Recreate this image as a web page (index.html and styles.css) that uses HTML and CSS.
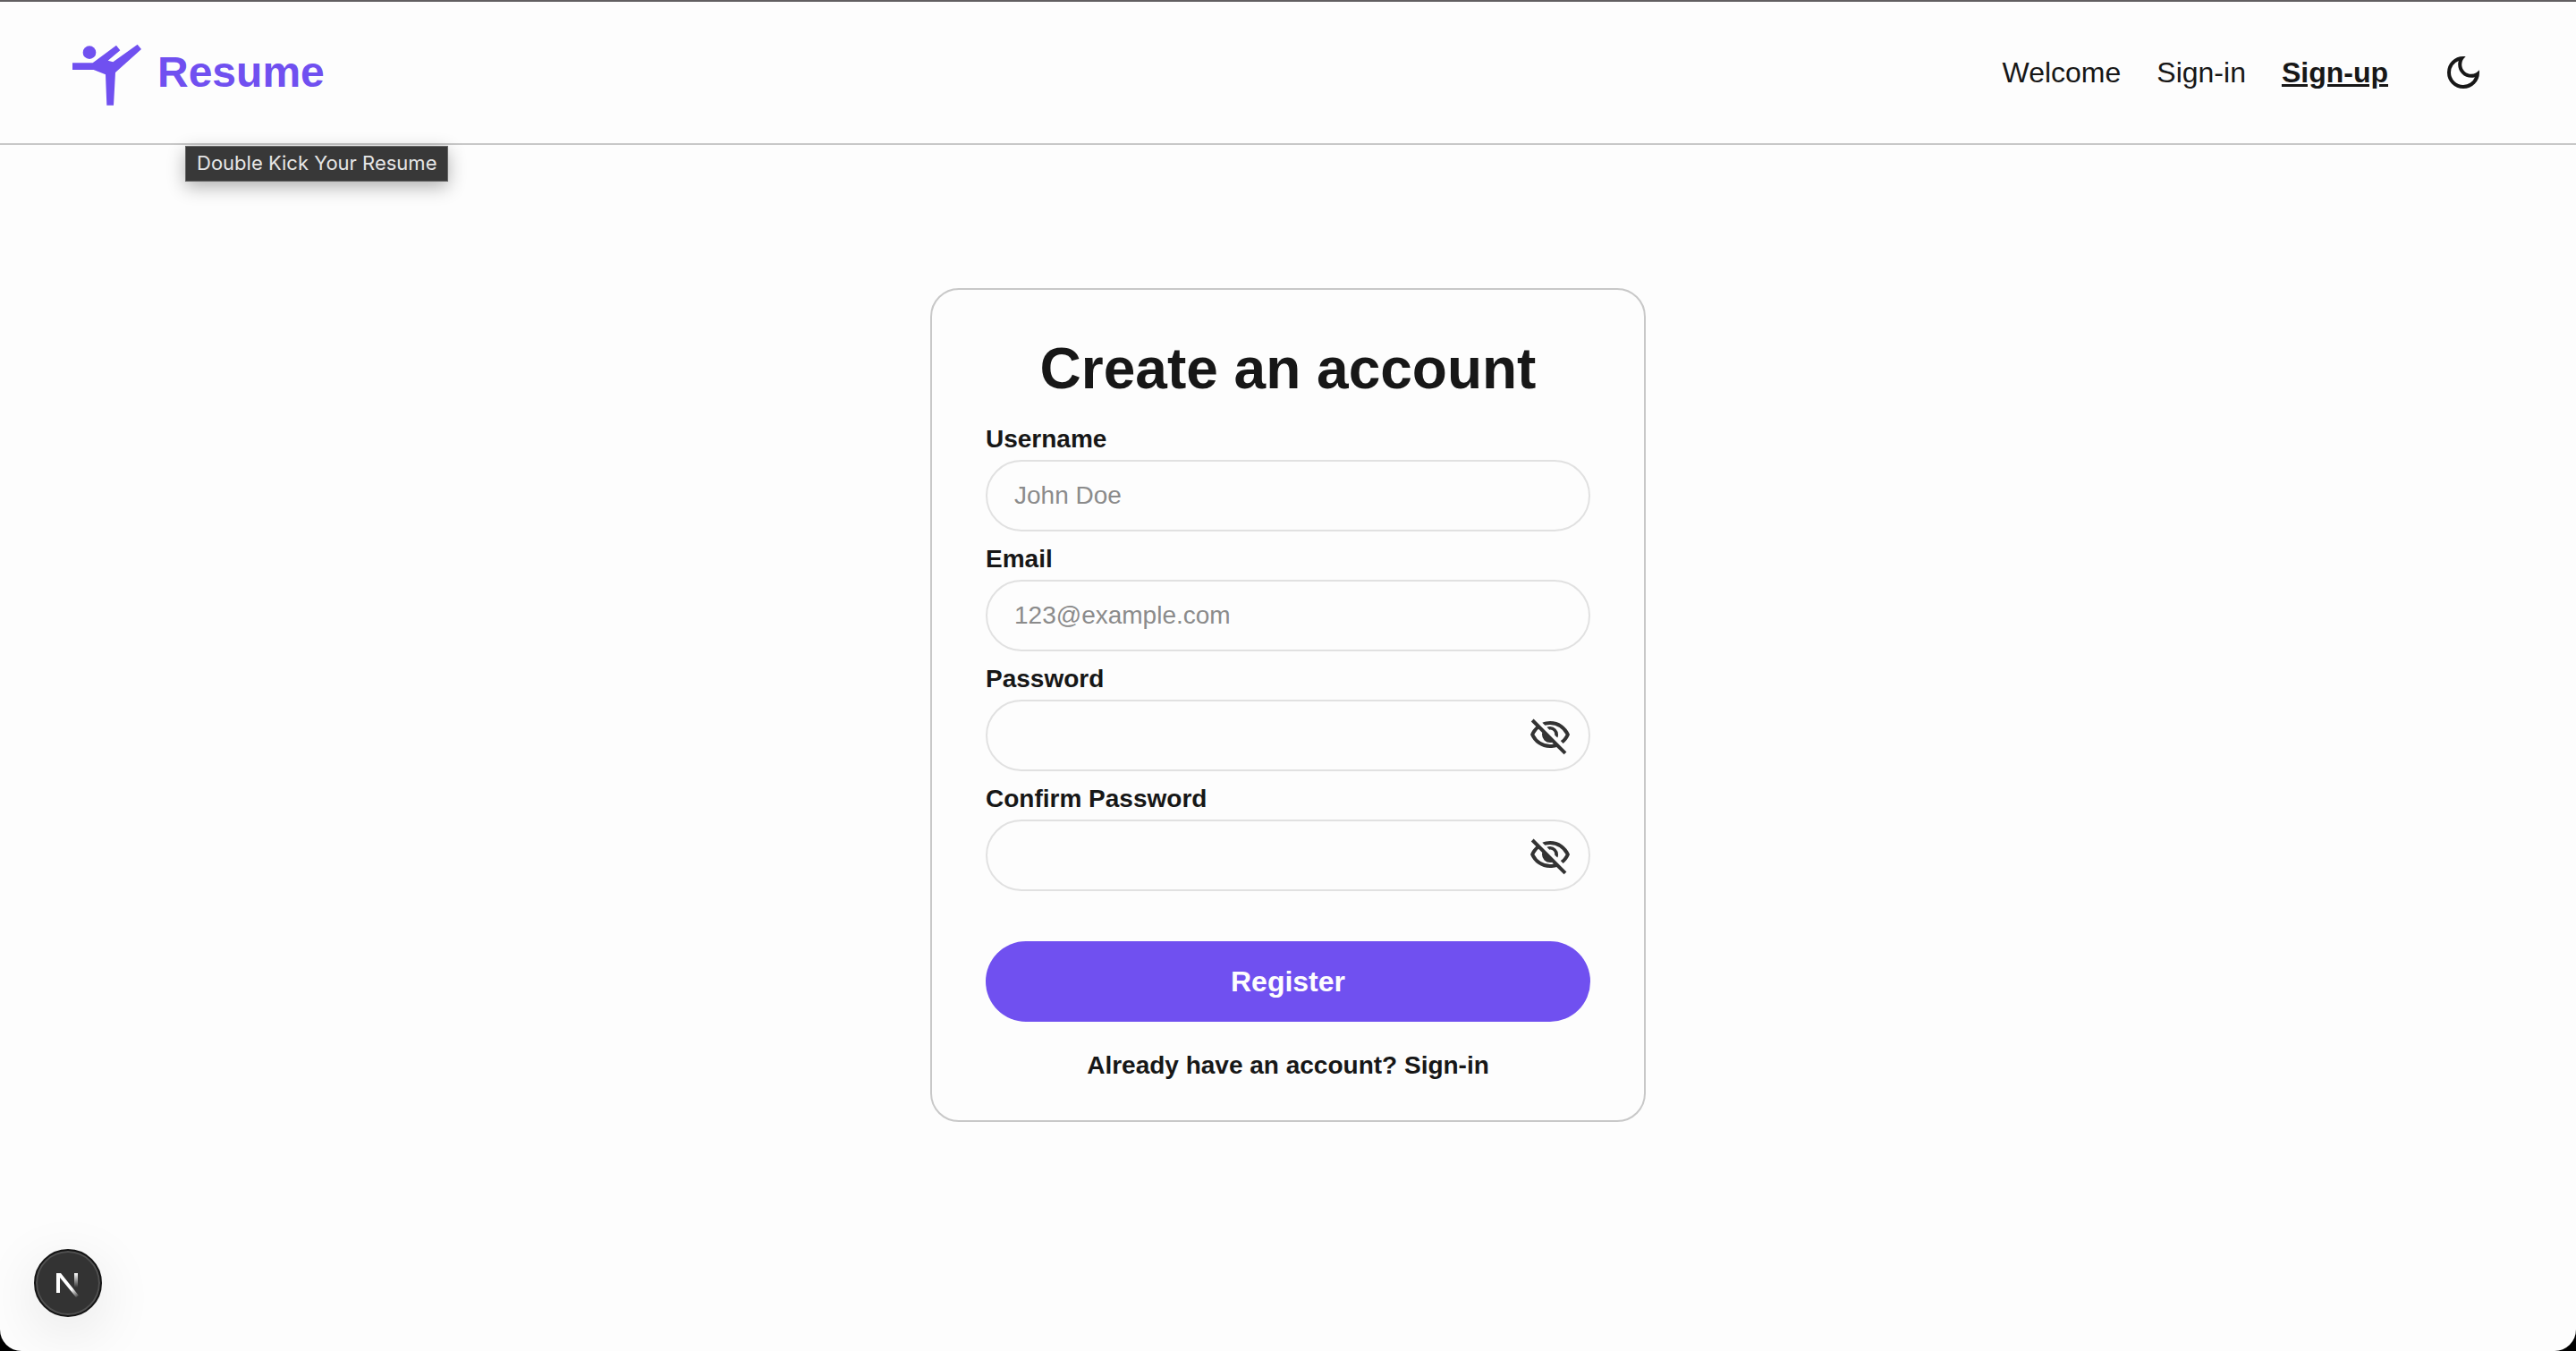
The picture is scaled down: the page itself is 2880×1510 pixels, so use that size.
FILE: index.html
```html
<!DOCTYPE html>
<html lang="en">
<head>
<meta charset="utf-8">
<meta name="viewport" content="width=device-width, initial-scale=1">
<title>Resume - Sign-up</title>
<link rel="stylesheet" href="styles.css">
</head>
<body>
<div class="page">
  <header class="header">
    <a class="brand" href="#" aria-describedby="brand-tip">
      <svg class="brand-icon" viewBox="60 33 240 240" aria-hidden="true">
        <circle cx="120" cy="86" r="22"/>
        <path d="M63 121H131L210 62L223 79L182 113L199 118L281 59L294 75L207 153L201 263H178L174 160L134 144H63Z"/>
      </svg>
      <span>Resume</span>
    </a>
    <span class="tooltip" id="brand-tip" role="tooltip">Double Kick Your Resume</span>
    <nav class="nav">
      <a class="nav-link" href="#">Welcome</a>
      <a class="nav-link" href="#">Sign-in</a>
      <a class="nav-link nav-link-active" href="#" aria-current="page">Sign-up</a>
      <button class="theme-button" type="button" aria-label="Switch to dark mode">
        <svg class="icon" viewBox="0 -960 960 960" aria-hidden="true"><path d="M480-120q-150 0-255-105T120-480q0-150 105-255t255-105q14 0 27.500 1t26.500 3q-41 29-65.500 75.500T444-660q0 90 63 153t153 63q55 0 101-24.500t75-65.500q2 13 3 26.500t1 27.500q0 150-105 255T480-120Zm0-80q88 0 158-48.500T740-375q-20 5-40 8t-40 3q-123 0-209.500-86.500T364-660q0-20 3-40t8-40q-78 32-126.500 102T200-480q0 116 82 198t198 82Z"/></svg>
      </button>
    </nav>
  </header>
  <main class="main">
    <section class="card">
      <h1 class="title">Create an account</h1>
      <form class="form">
        <div class="field">
          <label class="label" for="username">Username</label>
          <input class="input" id="username" type="text" placeholder="John Doe">
        </div>
        <div class="field">
          <label class="label" for="email">Email</label>
          <input class="input" id="email" type="email" placeholder="123@example.com">
        </div>
        <div class="field">
          <label class="label" for="password">Password</label>
          <div class="password">
            <input class="input" id="password" type="password">
            <button class="eye-button" type="button" aria-label="Show password">
              <svg class="icon" viewBox="0 -960 960 960" aria-hidden="true"><path d="m644-428-58-58q9-47-27-88t-93-32l-58-58q17-8 34.500-12t37.500-4q75 0 127.500 52.500T660-500q0 20-4 37.500T644-428Zm128 126-58-56q38-29 67.500-63.500T832-500q-50-101-143.500-160.500T480-720q-29 0-57 4t-55 12l-62-62q41-17 84-25.500t90-8.500q151 0 269 83.500T920-500q-23 59-60.500 109.500T772-302Zm20 246L624-222q-35 11-70.500 16.500T480-200q-151 0-269-83.500T40-500q21-53 53-98.500t73-81.500L56-792l56-56 736 736-56 56ZM222-624q-29 26-53 57t-41 67q50 101 143.500 160.500T480-280q20 0 39-2.500t39-5.500l-36-38q-11 3-21 4.500t-21 1.500q-75 0-127.500-52.500T300-500q0-11 1.500-21t4.500-21l-84-82Z"/></svg>
            </button>
          </div>
        </div>
        <div class="field">
          <label class="label" for="confirm">Confirm Password</label>
          <div class="password">
            <input class="input" id="confirm" type="password">
            <button class="eye-button" type="button" aria-label="Show confirmed password">
              <svg class="icon" viewBox="0 -960 960 960" aria-hidden="true"><path d="m644-428-58-58q9-47-27-88t-93-32l-58-58q17-8 34.500-12t37.500-4q75 0 127.500 52.500T660-500q0 20-4 37.500T644-428Zm128 126-58-56q38-29 67.500-63.500T832-500q-50-101-143.500-160.500T480-720q-29 0-57 4t-55 12l-62-62q41-17 84-25.500t90-8.500q151 0 269 83.500T920-500q-23 59-60.500 109.500T772-302Zm20 246L624-222q-35 11-70.500 16.500T480-200q-151 0-269-83.500T40-500q21-53 53-98.500t73-81.500L56-792l56-56 736 736-56 56ZM222-624q-29 26-53 57t-41 67q50 101 143.500 160.500T480-280q20 0 39-2.500t39-5.500l-36-38q-11 3-21 4.500t-21 1.500q-75 0-127.500-52.500T300-500q0-11 1.500-21t4.500-21l-84-82Z"/></svg>
            </button>
          </div>
        </div>
        <button class="submit" type="submit">Register</button>
      </form>
      <p class="switch">Already have an account? <a class="switch-link" href="#">Sign-in</a></p>
    </section>
  </main>
  <button class="dev-badge" type="button" aria-label="Open developer tools">
    <svg class="dev-icon" viewBox="0 0 76 76" fill="none" aria-hidden="true">
      <defs>
        <linearGradient id="fade-diagonal" gradientUnits="userSpaceOnUse" x1="42" y1="45" x2="50" y2="54"><stop stop-color="#fff"/><stop offset="1" stop-color="#fff" stop-opacity="0"/></linearGradient>
        <linearGradient id="fade-stem" gradientUnits="userSpaceOnUse" x1="47" y1="27" x2="47" y2="43"><stop stop-color="#fff"/><stop offset="1" stop-color="#fff" stop-opacity="0"/></linearGradient>
      </defs>
      <path fill="url(#fade-diagonal)" d="M25 27H30L50 52L47 54L29 32V49H25Z"/>
      <path fill="url(#fade-stem)" d="M45 27H49V43H45Z"/>
    </svg>
  </button>
</div>
</body>
</html>
```
FILE: styles.css
```css
* {
  box-sizing: border-box;
}

html {
  background: #000;
}

body {
  margin: 0;
  color: #171717;
  font-family: "Liberation Sans", Arial, sans-serif;
  font-size: 28px;
  line-height: 32px;
}

a {
  color: inherit;
  text-decoration: none;
}

button {
  padding: 0;
  border: 0;
  background: none;
  color: inherit;
  font: inherit;
  cursor: pointer;
}

.page {
  min-height: 100vh;
  border-top: 2px solid #625f61;
  border-radius: 0 0 24px 24px;
  background: #fdfdfd;
}

.header {
  position: relative;
  display: flex;
  align-items: center;
  justify-content: space-between;
  height: 160px;
  padding: 0 82px 0 80px;
  border-bottom: 2px solid #c8c8c8;
}

.brand {
  display: flex;
  align-items: center;
  gap: 16px;
  color: #7050f0;
  font-size: 48px;
  font-weight: 700;
  line-height: 56px;
}

.brand-icon {
  width: 80px;
  height: 80px;
  fill: currentColor;
}

.tooltip {
  position: absolute;
  top: 161px;
  left: 207px;
  padding: 2px 12px 4px;
  border: 1px solid #676767;
  background: #383838;
  box-shadow: 0 6px 20px rgba(0, 0, 0, 0.3);
  color: #e6e6e6;
  font-family: Inter, sans-serif;
  font-size: 22px;
  font-weight: 400;
  white-space: nowrap;
}

.nav {
  display: flex;
  align-items: center;
  gap: 40px;
  font-size: 32px;
  line-height: 36px;
}

.nav-link-active {
  font-weight: 700;
  text-decoration: underline;
}

.theme-button {
  padding: 20px;
}

.icon {
  display: block;
  width: 48px;
  height: 48px;
  fill: currentColor;
}

.main {
  display: flex;
  justify-content: center;
  padding: 160px 32px;
}

.card {
  width: 100%;
  max-width: 800px;
  padding: 52px 60px 45px;
  border: 2px solid #c8c8c8;
  border-radius: 32px;
}

.title {
  margin: 0 0 27px;
  font-size: 64px;
  line-height: 72px;
  text-align: center;
}

.form {
  display: flex;
  flex-direction: column;
  gap: 15px;
}

.field {
  display: flex;
  flex-direction: column;
  gap: 7px;
}

.label {
  font-weight: 700;
}

.input {
  display: block;
  width: 100%;
  height: 80px;
  padding: 0 30px;
  border: 2px solid #e1e1e1;
  border-radius: 40px;
  background: transparent;
  color: inherit;
  font: inherit;
}

.input::placeholder {
  color: #8b8b8b;
  opacity: 1;
}

.password {
  position: relative;
}

.password .input {
  padding-right: 80px;
}

.eye-button {
  position: absolute;
  top: 16px;
  right: 21px;
  color: #333;
}

.submit {
  height: 90px;
  margin-top: 41px;
  border-radius: 45px;
  background: #7050f0;
  color: #fdfdfd;
  font-size: 32px;
  font-weight: 700;
  line-height: 36px;
}

.switch {
  margin: 33px 0 0;
  font-weight: 700;
  text-align: center;
}

.dev-badge {
  position: fixed;
  bottom: 38px;
  left: 38px;
  width: 76px;
  height: 76px;
  border: 2px solid #141414;
  border-radius: 50%;
  background: #333;
  box-shadow: inset 0 0 0 2px #505050, 0 16px 64px rgba(0, 0, 0, 0.1);
}

.dev-icon {
  display: block;
  width: 76px;
  height: 76px;
  margin: -2px;
}
```
